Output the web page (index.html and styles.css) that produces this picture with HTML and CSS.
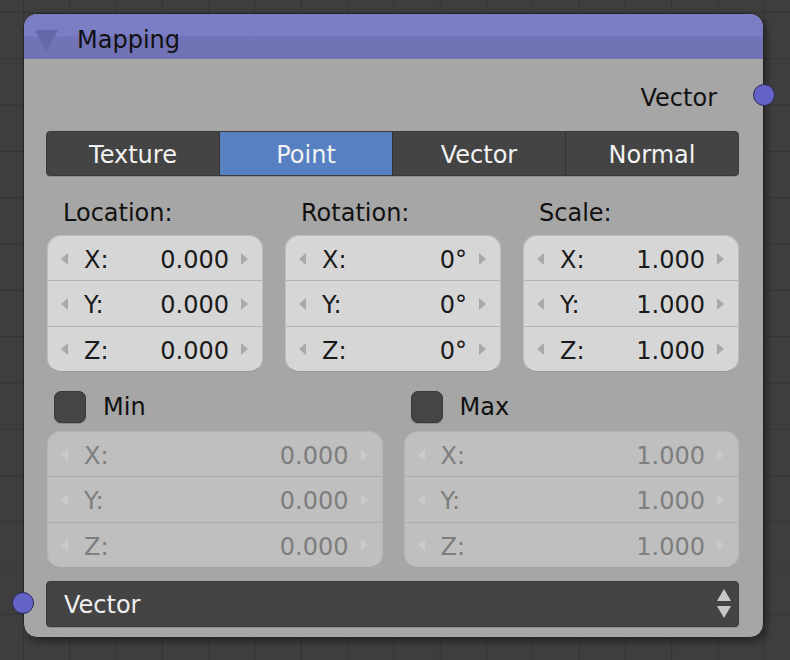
FILE: index.html
```html
<!DOCTYPE html>
<html>
<head>
<meta charset="utf-8">
<link rel="stylesheet" href="styles.css">
</head>
<body>
<div class="node">
  <div class="header">
    <svg class="collapse" width="24" height="24" viewBox="0 0 24 24"><polygon points="0,1 23,1 11.5,23" fill="#6667a8"/></svg>
    <span class="title">Mapping</span>
  </div>
  <div class="body">
    <div class="output-row">Vector</div>
    <div class="tabs">
      <div class="tab">Texture</div>
      <div class="tab active">Point</div>
      <div class="tab">Vector</div>
      <div class="tab">Normal</div>
    </div>
    <div class="three-cols">
      <div class="col">
        <div class="col-label">Location:</div>
        <div class="fields">
          <div class="field"><span class="arr l"></span><span class="axis">X:</span><span class="val">0.000</span><span class="arr r"></span></div>
          <div class="field"><span class="arr l"></span><span class="axis">Y:</span><span class="val">0.000</span><span class="arr r"></span></div>
          <div class="field"><span class="arr l"></span><span class="axis">Z:</span><span class="val">0.000</span><span class="arr r"></span></div>
        </div>
      </div>
      <div class="col">
        <div class="col-label">Rotation:</div>
        <div class="fields">
          <div class="field"><span class="arr l"></span><span class="axis">X:</span><span class="val">0°</span><span class="arr r"></span></div>
          <div class="field"><span class="arr l"></span><span class="axis">Y:</span><span class="val">0°</span><span class="arr r"></span></div>
          <div class="field"><span class="arr l"></span><span class="axis">Z:</span><span class="val">0°</span><span class="arr r"></span></div>
        </div>
      </div>
      <div class="col">
        <div class="col-label">Scale:</div>
        <div class="fields">
          <div class="field"><span class="arr l"></span><span class="axis">X:</span><span class="val">1.000</span><span class="arr r"></span></div>
          <div class="field"><span class="arr l"></span><span class="axis">Y:</span><span class="val">1.000</span><span class="arr r"></span></div>
          <div class="field"><span class="arr l"></span><span class="axis">Z:</span><span class="val">1.000</span><span class="arr r"></span></div>
        </div>
      </div>
    </div>
    <div class="two-cols">
      <div class="col">
        <div class="check-row"><span class="checkbox"></span><span class="check-label">Min</span></div>
        <div class="fields disabled">
          <div class="field"><span class="arr l"></span><span class="axis">X:</span><span class="val">0.000</span><span class="arr r"></span></div>
          <div class="field"><span class="arr l"></span><span class="axis">Y:</span><span class="val">0.000</span><span class="arr r"></span></div>
          <div class="field"><span class="arr l"></span><span class="axis">Z:</span><span class="val">0.000</span><span class="arr r"></span></div>
        </div>
      </div>
      <div class="col">
        <div class="check-row"><span class="checkbox"></span><span class="check-label">Max</span></div>
        <div class="fields disabled">
          <div class="field"><span class="arr l"></span><span class="axis">X:</span><span class="val">1.000</span><span class="arr r"></span></div>
          <div class="field"><span class="arr l"></span><span class="axis">Y:</span><span class="val">1.000</span><span class="arr r"></span></div>
          <div class="field"><span class="arr l"></span><span class="axis">Z:</span><span class="val">1.000</span><span class="arr r"></span></div>
        </div>
      </div>
    </div>
    <div class="dropdown">
      <span>Vector</span>
      <svg class="updown" width="14" height="30" viewBox="0 0 14 30"><polygon points="7,0 14,12 0,12" fill="#c8c8c8"/><polygon points="0,17 14,17 7,29" fill="#c8c8c8"/></svg>
    </div>
  </div>
  <span class="socket out"></span>
  <span class="socket in"></span>
</div>
</body>
</html>
```
FILE: styles.css
```css
html, body {
  margin: 0;
  padding: 0;
}
body {
  width: 790px;
  height: 660px;
  overflow: hidden;
  background-color: #3e3e3e;
  background-image:
    linear-gradient(to right, #343434 0, #343434 1px, transparent 1px),
    linear-gradient(to bottom, #343434 0, #343434 1px, transparent 1px);
  background-size: 46.3px 46.3px;
  background-position: 23px 12px;
  font-family: "DejaVu Sans", "Liberation Sans", sans-serif;
  font-size: 24px;
  padding-top: 13px;
  box-sizing: border-box;
}
.node {
  position: relative;
  margin-left: 23px;
  width: 741px;
  height: 625px;
  box-sizing: border-box;
  border: 1px solid #262626;
  border-radius: 14px;
  background: #a6a6a6;
  box-shadow: 3px 4px 6px rgba(0,0,0,0.35);
}
.header {
  height: 45px;
  border-radius: 13px 13px 0 0;
  background: linear-gradient(to bottom, #7c7ec5 0, #7b7dc4 22px, #7273b6 23px, #7273b6 100%);
  display: flex;
  align-items: center;
  padding-left: 11px;
  color: #111;
}
.collapse {
  display: block;
  margin-top: 9px;
}
.title {
  margin-left: 18px;
  margin-top: 6px;
}
.body {
  padding: 0 24px 0 22px;
}
.output-row {
  margin-top: 15px;
  height: 46px;
  line-height: 48px;
  text-align: right;
  padding-right: 22px;
  color: #111;
}
.tabs {
  margin-top: 11px;
  height: 45px;
  display: flex;
  border-radius: 4px;
  background: #444;
  border: 1px solid #3a3a3a;
  box-sizing: border-box;
  box-shadow: 0 1px 0 #8e8e8e;
  overflow: hidden;
}
.tab {
  flex: 1;
  display: flex;
  align-items: center;
  justify-content: center;
  color: #f2f2f2;
  border-left: 1px solid #333;
  padding-top: 3px;
}
.tab:first-child {
  border-left: none;
}
.tab.active {
  background: #5680c2;
}
.three-cols {
  display: grid;
  grid-template-columns: 1fr 1fr 1fr;
  column-gap: 21px;
  margin-top: 22px;
}
.col-label {
  height: 30px;
  line-height: 30px;
  padding-left: 17px;
  color: #111;
  margin-bottom: 7px;
}
.fields {
  background: #d6d6d6;
  border-radius: 14px;
  border: 1px solid #bdbdbd;
  border-bottom-color: #9a9a9a;
  margin-left: 1px;
  overflow: hidden;
  color: #1a1a1a;
}
.field {
  height: 44px;
  box-sizing: border-box;
  display: flex;
  align-items: center;
  padding: 4px 14px 0 13px;
}
.field + .field {
  height: 46px;
  box-shadow: inset 0 1px 0 #b4b4b4;
}
.field:last-child {
  height: 45px;
}
.arr {
  width: 0;
  height: 0;
  border-top: 6px solid transparent;
  border-bottom: 6px solid transparent;
  margin-top: -3px;
}
.arr.l {
  border-right: 7px solid #a9a9a9;
}
.arr.r {
  border-left: 7px solid #a9a9a9;
  margin-left: 12px;
}
.axis {
  margin-left: 16px;
  flex: 1;
}
.two-cols {
  display: grid;
  grid-template-columns: 1fr 1fr;
  column-gap: 20px;
  margin-top: 17px;
}
.check-row {
  height: 36px;
  display: flex;
  align-items: center;
  padding-left: 8px;
  margin-bottom: 6px;
  color: #111;
}
.checkbox {
  width: 32px;
  height: 32px;
  box-sizing: border-box;
  border-radius: 7px;
  background: #454545;
  border: 1px solid #3a3a3a;
  box-shadow: 0 1px 0 #8c8c8c;
}
.check-label {
  margin-left: 17px;
}
.fields.disabled {
  background: #bfbfbf;
  border-color: #b5b5b5;
  border-bottom-color: #a3a3a3;
  color: #7e7e7e;
}
.fields.disabled .field + .field {
  box-shadow: inset 0 1px 0 #acacac;
}
.fields.disabled .arr.l {
  border-right-color: #cbcbcb;
}
.fields.disabled .arr.r {
  border-left-color: #cbcbcb;
}
.dropdown {
  margin-top: 13px;
  height: 46px;
  border-radius: 4px;
  background: #444;
  border: 1px solid #3a3a3a;
  box-sizing: border-box;
  box-shadow: 0 1px 0 #8e8e8e;
  display: flex;
  align-items: center;
  padding: 2px 7px 0 17px;
  color: #efefef;
}
.dropdown span {
  flex: 1;
}
.updown {
  display: block;
  margin-top: -2px;
}
.socket {
  position: absolute;
  width: 22px;
  height: 22px;
  box-sizing: border-box;
  border-radius: 50%;
  background: #6464c8;
  border: 1px solid #2a2a55;
}
.socket.out {
  right: -12px;
  top: 70px;
}
.socket.in {
  left: -12px;
  top: 578px;
}
```
